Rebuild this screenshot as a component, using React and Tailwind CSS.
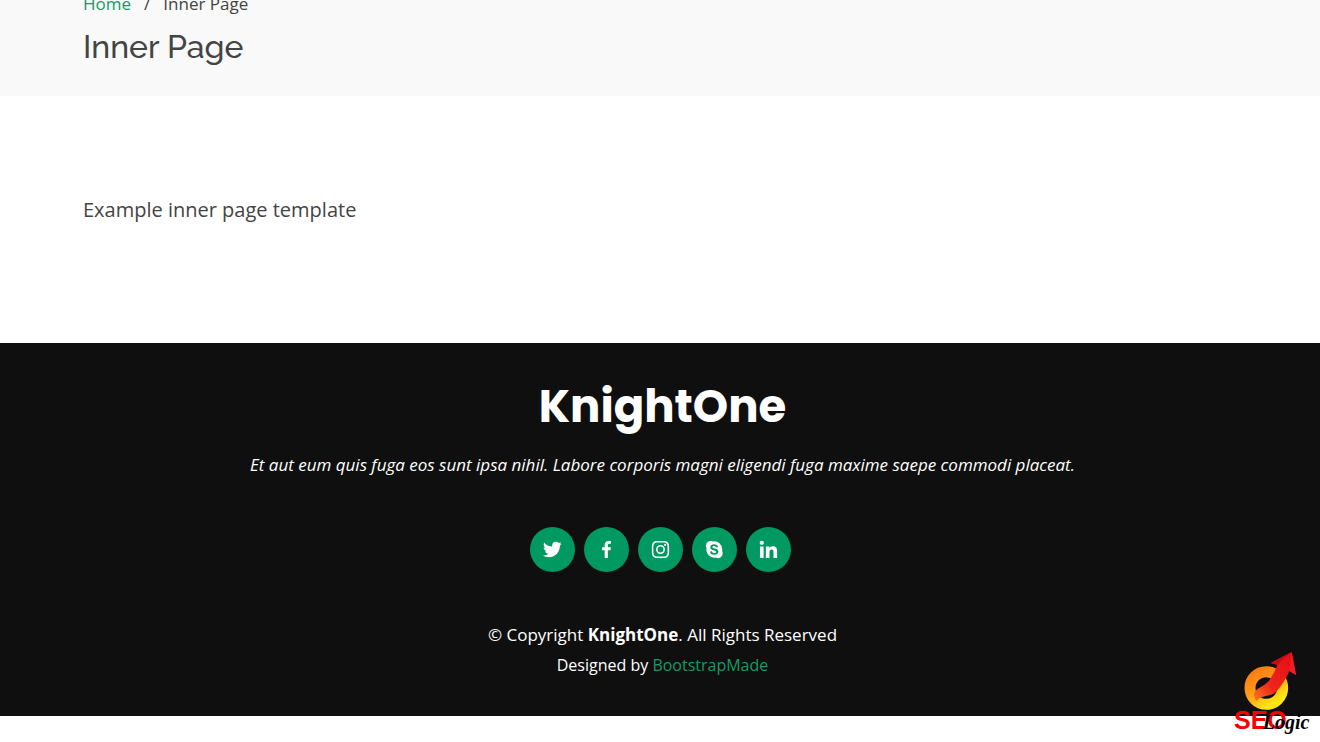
import {
  BiLogoTwitter,
  BiLogoFacebook,
  BiLogoInstagram,
  BiLogoSkype,
  BiLogoLinkedin,
} from "react-icons/bi";

const socials = [
  { name: "Twitter", Icon: BiLogoTwitter },
  { name: "Facebook", Icon: BiLogoFacebook },
  { name: "Instagram", Icon: BiLogoInstagram },
  { name: "Skype", Icon: BiLogoSkype },
  { name: "LinkedIn", Icon: BiLogoLinkedin },
];

function Breadcrumbs() {
  return (
    <section className="overflow-hidden bg-[#f9f9f9] pr-20 pb-[27px] pl-[83px]">
      <nav aria-label="Breadcrumb" className="-mt-2">
        <ol className="flex gap-[13px] text-[17px] leading-6">
          <li><a href="#home" className="text-[#159b68]">Home</a></li>
          <li aria-hidden="true">/</li>
          <li>Inner Page</li>
        </ol>
      </nav>
      <h2 className="mt-[9px] font-['Raleway','Lato',sans-serif] text-[32px] leading-11 font-medium">Inner Page</h2>
    </section>
  );
}

function SeoLogicMark() {
  return (
    <div className="absolute right-2 bottom-2 flex w-[78px] flex-col">
      <svg viewBox="12 12 234 186" className="h-[62px] w-[78px]" aria-hidden="true">
        <defs>
          <linearGradient id="ring" x1="0" y1="0" x2="0.6" y2="1">
            <stop offset="0" stopColor="#ff7a10" />
            <stop offset="0.5" stopColor="#ff9a18" />
            <stop offset="1" stopColor="#ffe512" />
          </linearGradient>
          <linearGradient id="arrow" x1="0" y1="1" x2="1" y2="0">
            <stop offset="0" stopColor="#ff7a1c" />
            <stop offset="0.35" stopColor="#ee261c" />
            <stop offset="1" stopColor="#e50914" />
          </linearGradient>
        </defs>
        <circle cx="109" cy="120" r="49" fill="none" stroke="url(#ring)" strokeWidth="33" />
        <path d="M80 159C68 148 70 131 83 123C95 115 113 106 121 92C131 77 137 64 142 50L122 45L185 12L198 81L178 69C168 92 153 116 137 133C123 146 94 139 80 159Z" fill="url(#arrow)" />
        <path d="M122 45L185 12L142 50Z" fill="#c90b14" />
        <path d="M185 12L198 81L178 69Z" fill="#f51b24" />
      </svg>
      <div className="-mt-2 flex items-end">
        <span className="font-['Liberation_Sans',sans-serif] text-[25px] leading-7 font-bold text-[#f80000]">SEO</span>
        <span className="-ml-6 font-['Liberation_Serif',serif] text-[20px] leading-6 font-bold text-black italic">Logic</span>
      </div>
    </div>
  );
}

export default function App() {
  return (
    <div className="relative bg-white pb-[26px] font-['Open_Sans',sans-serif] text-[#444444]">
      <main>
        <Breadcrumbs />
        <section className="py-[99px] pr-20 pl-[83px]">
          <p className="pb-[19px] text-[20px] leading-[30px]">Example inner page template</p>
        </section>
      </main>
      <footer className="bg-[#0f0f0f] pt-[37px] pr-[78px] pb-[39px] pl-[83px] text-center text-white">
        <h3 className="font-['Poppins','Inter',sans-serif] text-[45px] leading-[54px] font-bold">KnightOne</h3>
        <p className="mt-[19px] text-[17px] leading-6 italic">
          Et aut eum quis fuga eos sunt ipsa nihil. Labore corporis magni eligendi fuga maxime saepe commodi placeat.
        </p>
        <div className="mt-[50px] flex justify-center gap-[9px] pr-[5px]">
          {socials.map(({ name, Icon }) => (
            <a key={name} href={"#" + name.toLowerCase()} aria-label={name} className="flex size-[45px] items-center justify-center rounded-full bg-[#009961]">
              <Icon className="mb-px size-[23px]" />
            </a>
          ))}
        </div>
        <p className="mt-[51px] text-[17px] leading-6">
          © Copyright <strong>KnightOne</strong>. All Rights Reserved
        </p>
        <p className="mt-[6px] text-[16px] leading-6">
          Designed by <a href="#bootstrapmade" className="text-[#159b68]">BootstrapMade</a>
        </p>
      </footer>
      <SeoLogicMark />
    </div>
  );
}
